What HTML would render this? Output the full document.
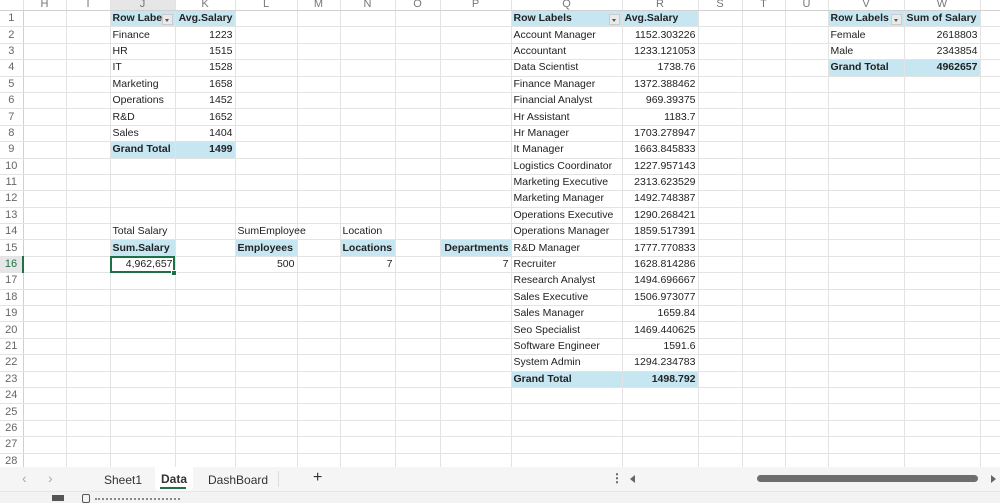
<!DOCTYPE html>
<html><head><meta charset="utf-8">
<style>
html,body{margin:0;padding:0;width:1000px;height:502px;overflow:hidden;background:#fff;font-family:"Liberation Sans",sans-serif;}
#grid{position:absolute;left:0;top:-6px;border-collapse:collapse;table-layout:fixed;width:1000px;font-size:10.5px;color:#222;}
#grid td{border-right:1px solid #e3e3e3;border-bottom:1px solid #e3e3e3;height:15.4px;padding:0 2px;white-space:nowrap;overflow:visible;line-height:15px;position:relative;}
#grid tr.ch td{height:16px;color:#777;text-align:center;font-size:11px;line-height:12px;vertical-align:bottom;border-bottom:1px solid #d0d0d0;}
#grid td.rh{color:#666;text-align:center;padding:0;border-right:1px solid #d0d0d0;font-size:11px;}
#grid td.rh.sel{background:#e6e6e6;color:#1e7145;border-right:2px solid #1e7145;}
#grid td.chs{background:#e6e6e6;border-bottom:2px solid #1e7145;}
#grid td.h{background:#c6e6f2;font-weight:bold;}
#grid td.r{text-align:right;}
#grid td.sc{outline:2px solid #1e7145;outline-offset:-2px;}
.dd{position:absolute;right:2px;top:3px;width:9px;height:9px;background:#eaeaea;border:1px solid #ccc;}
.dd:after{content:"";position:absolute;left:2px;top:4px;border-left:2.5px solid transparent;border-right:2.5px solid transparent;border-top:3px solid #555;}
#tabs{position:absolute;left:0;top:467px;width:1000px;height:24px;background:#f5f5f5;font-size:12px;color:#333;}
#status{position:absolute;left:0;top:491px;width:1000px;height:11px;background:#f3f3f3;border-top:1px solid #e6e6e6;}
</style></head><body>
<table id="grid">
<colgroup><col style="width:23px"><col style="width:43px"><col style="width:44px"><col style="width:65px"><col style="width:60px"><col style="width:62px"><col style="width:43px"><col style="width:55px"><col style="width:45px"><col style="width:71px"><col style="width:111px"><col style="width:76px"><col style="width:44px"><col style="width:43px"><col style="width:43px"><col style="width:76px"><col style="width:76px"><col style="width:20px"></colgroup>
<tr class="ch"><td></td><td>H</td><td>I</td><td class="chs">J</td><td>K</td><td>L</td><td>M</td><td>N</td><td>O</td><td>P</td><td>Q</td><td>R</td><td>S</td><td>T</td><td>U</td><td>V</td><td>W</td><td></td></tr>
<tr><td class="rh">1</td><td></td><td></td><td class="h">Row Labe<span class="dd"></span></td><td class="h r">Avg.Salary</td><td></td><td></td><td></td><td></td><td></td><td class="h">Row Labels<span class="dd"></span></td><td class="h">Avg.Salary</td><td></td><td></td><td></td><td class="h">Row Labels<span class="dd"></span></td><td class="h">Sum of Salary</td><td></td></tr>
<tr><td class="rh">2</td><td></td><td></td><td>Finance</td><td class="r">1223</td><td></td><td></td><td></td><td></td><td></td><td>Account Manager</td><td class="r">1152.303226</td><td></td><td></td><td></td><td>Female</td><td class="r">2618803</td><td></td></tr>
<tr><td class="rh">3</td><td></td><td></td><td>HR</td><td class="r">1515</td><td></td><td></td><td></td><td></td><td></td><td>Accountant</td><td class="r">1233.121053</td><td></td><td></td><td></td><td>Male</td><td class="r">2343854</td><td></td></tr>
<tr><td class="rh">4</td><td></td><td></td><td>IT</td><td class="r">1528</td><td></td><td></td><td></td><td></td><td></td><td>Data Scientist</td><td class="r">1738.76</td><td></td><td></td><td></td><td class="h">Grand Total</td><td class="h r">4962657</td><td></td></tr>
<tr><td class="rh">5</td><td></td><td></td><td>Marketing</td><td class="r">1658</td><td></td><td></td><td></td><td></td><td></td><td>Finance Manager</td><td class="r">1372.388462</td><td></td><td></td><td></td><td></td><td></td><td></td></tr>
<tr><td class="rh">6</td><td></td><td></td><td>Operations</td><td class="r">1452</td><td></td><td></td><td></td><td></td><td></td><td>Financial Analyst</td><td class="r">969.39375</td><td></td><td></td><td></td><td></td><td></td><td></td></tr>
<tr><td class="rh">7</td><td></td><td></td><td>R&amp;D</td><td class="r">1652</td><td></td><td></td><td></td><td></td><td></td><td>Hr Assistant</td><td class="r">1183.7</td><td></td><td></td><td></td><td></td><td></td><td></td></tr>
<tr><td class="rh">8</td><td></td><td></td><td>Sales</td><td class="r">1404</td><td></td><td></td><td></td><td></td><td></td><td>Hr Manager</td><td class="r">1703.278947</td><td></td><td></td><td></td><td></td><td></td><td></td></tr>
<tr><td class="rh">9</td><td></td><td></td><td class="h">Grand Total</td><td class="h r">1499</td><td></td><td></td><td></td><td></td><td></td><td>It Manager</td><td class="r">1663.845833</td><td></td><td></td><td></td><td></td><td></td><td></td></tr>
<tr><td class="rh">10</td><td></td><td></td><td></td><td></td><td></td><td></td><td></td><td></td><td></td><td>Logistics Coordinator</td><td class="r">1227.957143</td><td></td><td></td><td></td><td></td><td></td><td></td></tr>
<tr><td class="rh">11</td><td></td><td></td><td></td><td></td><td></td><td></td><td></td><td></td><td></td><td>Marketing Executive</td><td class="r">2313.623529</td><td></td><td></td><td></td><td></td><td></td><td></td></tr>
<tr><td class="rh">12</td><td></td><td></td><td></td><td></td><td></td><td></td><td></td><td></td><td></td><td>Marketing Manager</td><td class="r">1492.748387</td><td></td><td></td><td></td><td></td><td></td><td></td></tr>
<tr><td class="rh">13</td><td></td><td></td><td></td><td></td><td></td><td></td><td></td><td></td><td></td><td>Operations Executive</td><td class="r">1290.268421</td><td></td><td></td><td></td><td></td><td></td><td></td></tr>
<tr><td class="rh">14</td><td></td><td></td><td>Total Salary</td><td></td><td>SumEmployee</td><td></td><td>Location</td><td></td><td></td><td>Operations Manager</td><td class="r">1859.517391</td><td></td><td></td><td></td><td></td><td></td><td></td></tr>
<tr><td class="rh">15</td><td></td><td></td><td class="h">Sum.Salary</td><td></td><td class="h">Employees</td><td></td><td class="h">Locations</td><td></td><td class="h r">Departments</td><td>R&amp;D Manager</td><td class="r">1777.770833</td><td></td><td></td><td></td><td></td><td></td><td></td></tr>
<tr><td class="rh sel">16</td><td></td><td></td><td class="r sc">4,962,657</td><td></td><td class="r">500</td><td></td><td class="r">7</td><td></td><td class="r">7</td><td>Recruiter</td><td class="r">1628.814286</td><td></td><td></td><td></td><td></td><td></td><td></td></tr>
<tr><td class="rh">17</td><td></td><td></td><td></td><td></td><td></td><td></td><td></td><td></td><td></td><td>Research Analyst</td><td class="r">1494.696667</td><td></td><td></td><td></td><td></td><td></td><td></td></tr>
<tr><td class="rh">18</td><td></td><td></td><td></td><td></td><td></td><td></td><td></td><td></td><td></td><td>Sales Executive</td><td class="r">1506.973077</td><td></td><td></td><td></td><td></td><td></td><td></td></tr>
<tr><td class="rh">19</td><td></td><td></td><td></td><td></td><td></td><td></td><td></td><td></td><td></td><td>Sales Manager</td><td class="r">1659.84</td><td></td><td></td><td></td><td></td><td></td><td></td></tr>
<tr><td class="rh">20</td><td></td><td></td><td></td><td></td><td></td><td></td><td></td><td></td><td></td><td>Seo Specialist</td><td class="r">1469.440625</td><td></td><td></td><td></td><td></td><td></td><td></td></tr>
<tr><td class="rh">21</td><td></td><td></td><td></td><td></td><td></td><td></td><td></td><td></td><td></td><td>Software Engineer</td><td class="r">1591.6</td><td></td><td></td><td></td><td></td><td></td><td></td></tr>
<tr><td class="rh">22</td><td></td><td></td><td></td><td></td><td></td><td></td><td></td><td></td><td></td><td>System Admin</td><td class="r">1294.234783</td><td></td><td></td><td></td><td></td><td></td><td></td></tr>
<tr><td class="rh">23</td><td></td><td></td><td></td><td></td><td></td><td></td><td></td><td></td><td></td><td class="h">Grand Total</td><td class="h r">1498.792</td><td></td><td></td><td></td><td></td><td></td><td></td></tr>
<tr><td class="rh">24</td><td></td><td></td><td></td><td></td><td></td><td></td><td></td><td></td><td></td><td></td><td></td><td></td><td></td><td></td><td></td><td></td><td></td></tr>
<tr><td class="rh">25</td><td></td><td></td><td></td><td></td><td></td><td></td><td></td><td></td><td></td><td></td><td></td><td></td><td></td><td></td><td></td><td></td><td></td></tr>
<tr><td class="rh">26</td><td></td><td></td><td></td><td></td><td></td><td></td><td></td><td></td><td></td><td></td><td></td><td></td><td></td><td></td><td></td><td></td><td></td></tr>
<tr><td class="rh">27</td><td></td><td></td><td></td><td></td><td></td><td></td><td></td><td></td><td></td><td></td><td></td><td></td><td></td><td></td><td></td><td></td><td></td></tr>
<tr><td class="rh">28</td><td></td><td></td><td></td><td></td><td></td><td></td><td></td><td></td><td></td><td></td><td></td><td></td><td></td><td></td><td></td><td></td><td></td></tr>
</table>
<div style="position:absolute;left:171px;top:270px;width:4px;height:4px;background:#1e7145;border:1px solid #fff;"></div>
<div id="tabs">
  <span style="position:absolute;left:22px;top:3px;color:#aaa;font-size:14px;">&#8249;</span>
  <span style="position:absolute;left:48px;top:3px;color:#aaa;font-size:14px;">&#8250;</span>
  <span style="position:absolute;left:104px;top:6px;">Sheet1</span>
  <div style="position:absolute;left:155px;top:0;width:38px;height:24px;background:#fff;border-radius:0 0 4px 4px;"></div>
  <span style="position:absolute;left:161px;top:5px;font-weight:bold;">Data</span>
  <div style="position:absolute;left:160px;top:20px;width:26px;height:2px;background:#1e7145;"></div>
  <span style="position:absolute;left:208px;top:6px;">DashBoard</span>
  <div style="position:absolute;left:278px;top:4px;width:1px;height:16px;background:#ddd;"></div>
  <span style="position:absolute;left:313px;top:2px;font-size:16px;">+</span>
  <span style="position:absolute;left:611px;top:4px;font-size:12px;font-weight:bold;color:#555;">&#8942;</span>
  <div style="position:absolute;left:630px;top:8px;border-top:4px solid transparent;border-bottom:4px solid transparent;border-right:5px solid #666;"></div>
  <div style="position:absolute;left:757px;top:8px;width:221px;height:7px;background:#6e6e6e;border-radius:4px;"></div>
  <div style="position:absolute;left:991px;top:8px;border-top:4px solid transparent;border-bottom:4px solid transparent;border-left:5px solid #666;"></div>
</div>
<div id="status">
  <div style="position:absolute;left:52px;top:3px;width:12px;height:6px;background:#555;"></div>
  <div style="position:absolute;left:82px;top:2px;width:6px;height:7px;border:1px solid #555;border-radius:2px;"></div>
  <div style="position:absolute;left:95px;top:6px;width:85px;height:3px;border-top:2px dotted #888;"></div>
</div>
</body></html>
